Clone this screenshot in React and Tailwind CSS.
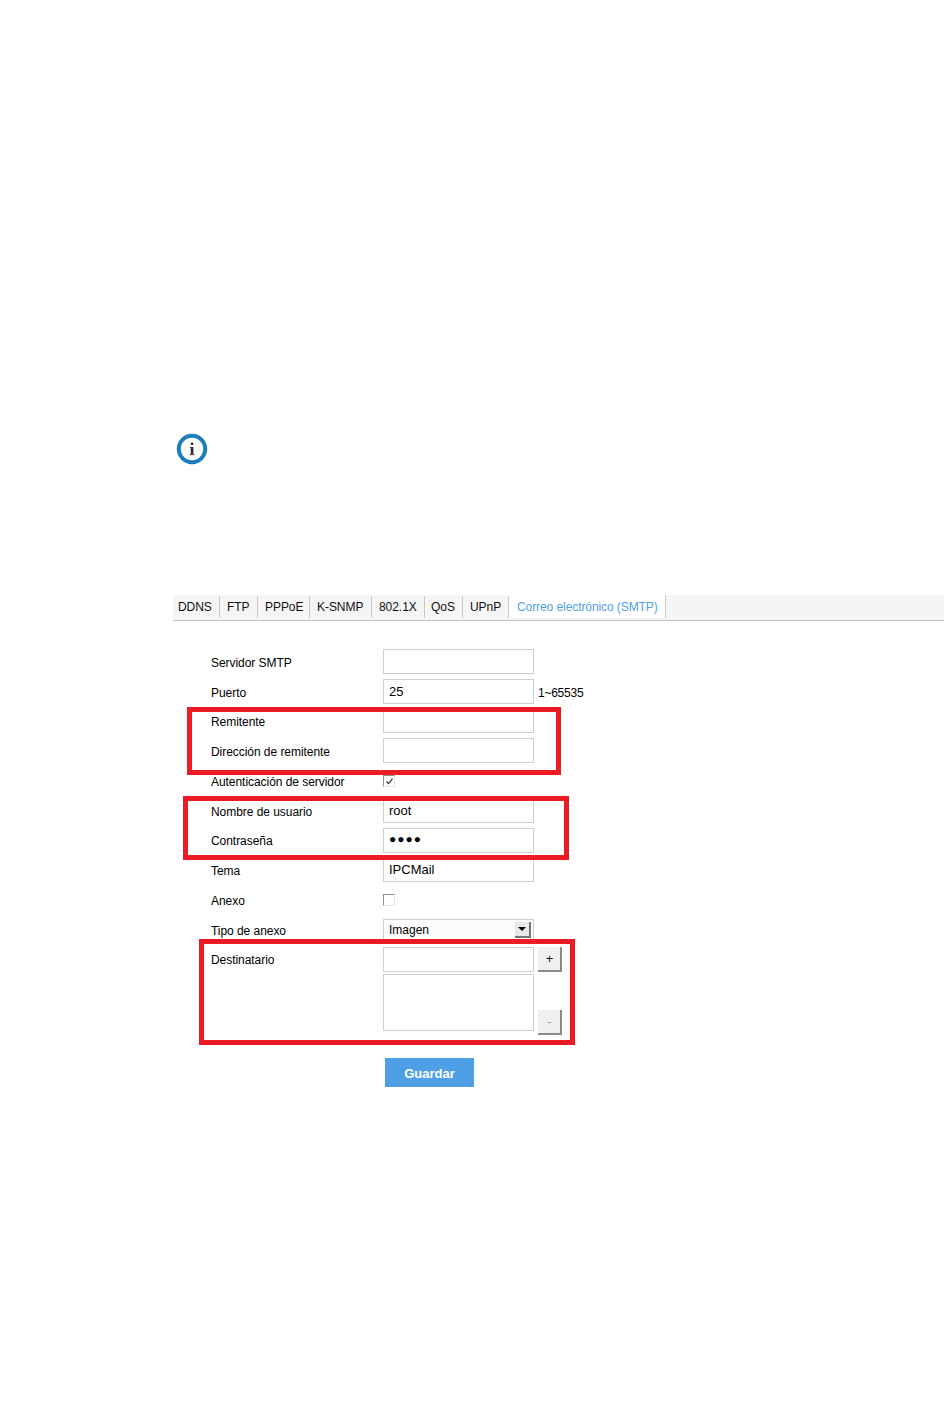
import React from "react";

const tabs = [
  { name: "DDNS", width: "w-[47px]", pad: "pl-[5px]" },
  { name: "FTP", width: "w-[38px]", pad: "pl-[7px]" },
  { name: "PPPoE", width: "w-[52px]", pad: "pl-[7px]" },
  { name: "K-SNMP", width: "w-[62px]", pad: "pl-[7px]" },
  { name: "802.1X", width: "w-[53px]", pad: "pl-[7px]" },
  { name: "QoS", width: "w-[38px]", pad: "pl-[6px]" },
  { name: "UPnP", width: "w-[46px]", pad: "pl-[7px]" },
];

function InfoIcon() {
  return (
    <svg width="32" height="32" viewBox="0 0 32 32">
      <circle cx="16" cy="16" r="13.2" fill="#fff" stroke="#1c7dbb" strokeWidth="4" />
      <rect x="14.8" y="9.5" width="2.6" height="2.6" rx="1" fill="#2b2b2b" />
      <rect x="14.8" y="14" width="2.6" height="8" fill="#2b2b2b" />
      <rect x="13.8" y="14" width="1.4" height="1.2" fill="#555555" />
      <rect x="13.8" y="21" width="4.6" height="1.2" fill="#555555" />
    </svg>
  );
}

function TextBox({ value, dots }) {
  return (
    <div className="w-[151px] h-[25px] border border-[#cfcfcf] bg-white pl-[5px] pt-[1px] text-[13px] leading-[21px] text-black">
      {dots ? <span className="block text-[12px] leading-[19px] tracking-[1px]">●●●●</span> : value}
    </div>
  );
}

function CheckBox({ checked }) {
  return (
    <div className="w-[12px] h-[12px] mt-[7px] border border-[#8f8f8f] border-r-[#e4e4e4] border-b-[#e4e4e4] bg-white flex items-center justify-center">
      {checked && (
        <svg width="9" height="9" viewBox="0 0 9 9">
          <path d="M1.5 4.5l2 2.2 4-5" fill="none" stroke="#333" strokeWidth="1.2" />
        </svg>
      )}
    </div>
  );
}

function Row({ label, height, children, labelPad = "pt-[6px]" }) {
  return (
    <div className={`flex ${height}`}>
      <div className={`w-[172px] text-[12px] leading-[16px] tracking-[-0.05px] text-black ${labelPad}`}>{label}</div>
      {children}
    </div>
  );
}

function SmallButton({ children, light }) {
  return (
    <div
      className={`w-[24px] h-[25px] pl-[1px] bg-[#f0f0f0] border-r-2 border-b-2 border-r-[#8a8a8a] border-b-[#8a8a8a] flex items-center justify-center text-[13px] ${
        light ? "text-[#999999]" : "text-[#111111]"
      }`}
    >
      {children}
    </div>
  );
}

export default function App() {
  return (
    <div className="relative w-[950px] h-[1408px] bg-white font-['Liberation_Sans',Arial,sans-serif]">
      <div className="pt-[433px] pl-[176px] h-[595px]">
        <InfoIcon />
      </div>

      <div className="ml-[173px] mr-[6px] h-[26px] bg-[#f5f5f5] border-b border-[#c4c4c4] flex">
        {tabs.map((tab) => (
          <div
            key={tab.name}
            className={`${tab.width} ${tab.pad} h-[22px] mt-[1px] border-r border-[#c8c8c8] text-[12px] leading-[23px] tracking-[-0.05px] text-[#111111]`}
          >
            {tab.name}
          </div>
        ))}
        <div className="w-[157px] h-[23px] pl-[8px] bg-white border-r border-[#c8c8c8] text-[12px] leading-[25px] tracking-[-0.08px] text-[#4f9fe6]">
          Correo electrónico (SMTP)
        </div>
      </div>

      <div className="ml-[211px] pt-[28px]">
        <Row label="Servidor SMTP" height="h-[30px]">
          <TextBox />
        </Row>
        <Row label="Puerto" height="h-[29px]">
          <TextBox value="25" />
          <span className="ml-[4px] pt-[6px] text-[12px] leading-[16px] tracking-[-0.25px] text-black">1~65535</span>
        </Row>
        <Row label="Remitente" height="h-[30px]">
          <TextBox />
        </Row>
        <Row label="Dirección de remitente" height="h-[30px]">
          <TextBox />
        </Row>
        <Row label="Autenticación de servidor" height="h-[30px]">
          <CheckBox checked />
        </Row>
        <Row label="Nombre de usuario" height="h-[30px]">
          <TextBox value="root" />
        </Row>
        <Row label="Contraseña" height="h-[29px]" labelPad="pt-[5px]">
          <TextBox dots />
        </Row>
        <Row label="Tema" height="h-[30px]">
          <TextBox value="IPCMail" />
        </Row>
        <Row label="Anexo" height="h-[32px]">
          <CheckBox />
        </Row>
        <Row label="Tipo de anexo" height="h-[28px]" labelPad="pt-[4px]">
          <div className="relative w-[151px] h-[25px] border border-[#cfcfcf] bg-[#fcfcfc] pl-[5px] pt-[1px] text-[12px] leading-[19px] text-black">
            Imagen
            <div className="absolute right-[2px] top-[2px] w-[16px] h-[16px] bg-[#e8e8e8] border-r-2 border-b-2 border-r-[#777777] border-b-[#777777] flex items-center justify-center">
              <div className="w-0 h-0 border-x-[4px] border-x-transparent border-t-[4px] border-t-black" />
            </div>
          </div>
        </Row>
        <div className="flex h-[90px]">
          <div className="w-[172px] pt-[5px] text-[12px] leading-[16px] tracking-[-0.05px] text-black">Destinatario</div>
          <div className="w-[151px]">
            <div className="h-[25px] border border-[#cfcfcf] bg-white" />
            <div className="mt-[2px] h-[57px] border border-[#cfcfcf] bg-white" />
          </div>
          <div className="ml-[4px] flex flex-col justify-between h-[88px]">
            <SmallButton>+</SmallButton>
            <SmallButton light>-</SmallButton>
          </div>
        </div>
        <div className="ml-[174px] mt-[21px] w-[89px] h-[29px] bg-[#4f9fe6] text-white text-[13px] font-bold text-center leading-[31px]">
          Guardar
        </div>
      </div>

      {/* red highlight boxes drawn over the form */}
      <div className="absolute left-[187px] top-[707px] w-[374px] h-[68px] border-[5px] border-[#ed1c24]" />
      <div className="absolute left-[183px] top-[796px] w-[386px] h-[64px] border-[5px] border-[#ed1c24]" />
      <div className="absolute left-[199px] top-[939px] w-[376px] h-[106px] border-[5px] border-[#ed1c24]" />
    </div>
  );
}
